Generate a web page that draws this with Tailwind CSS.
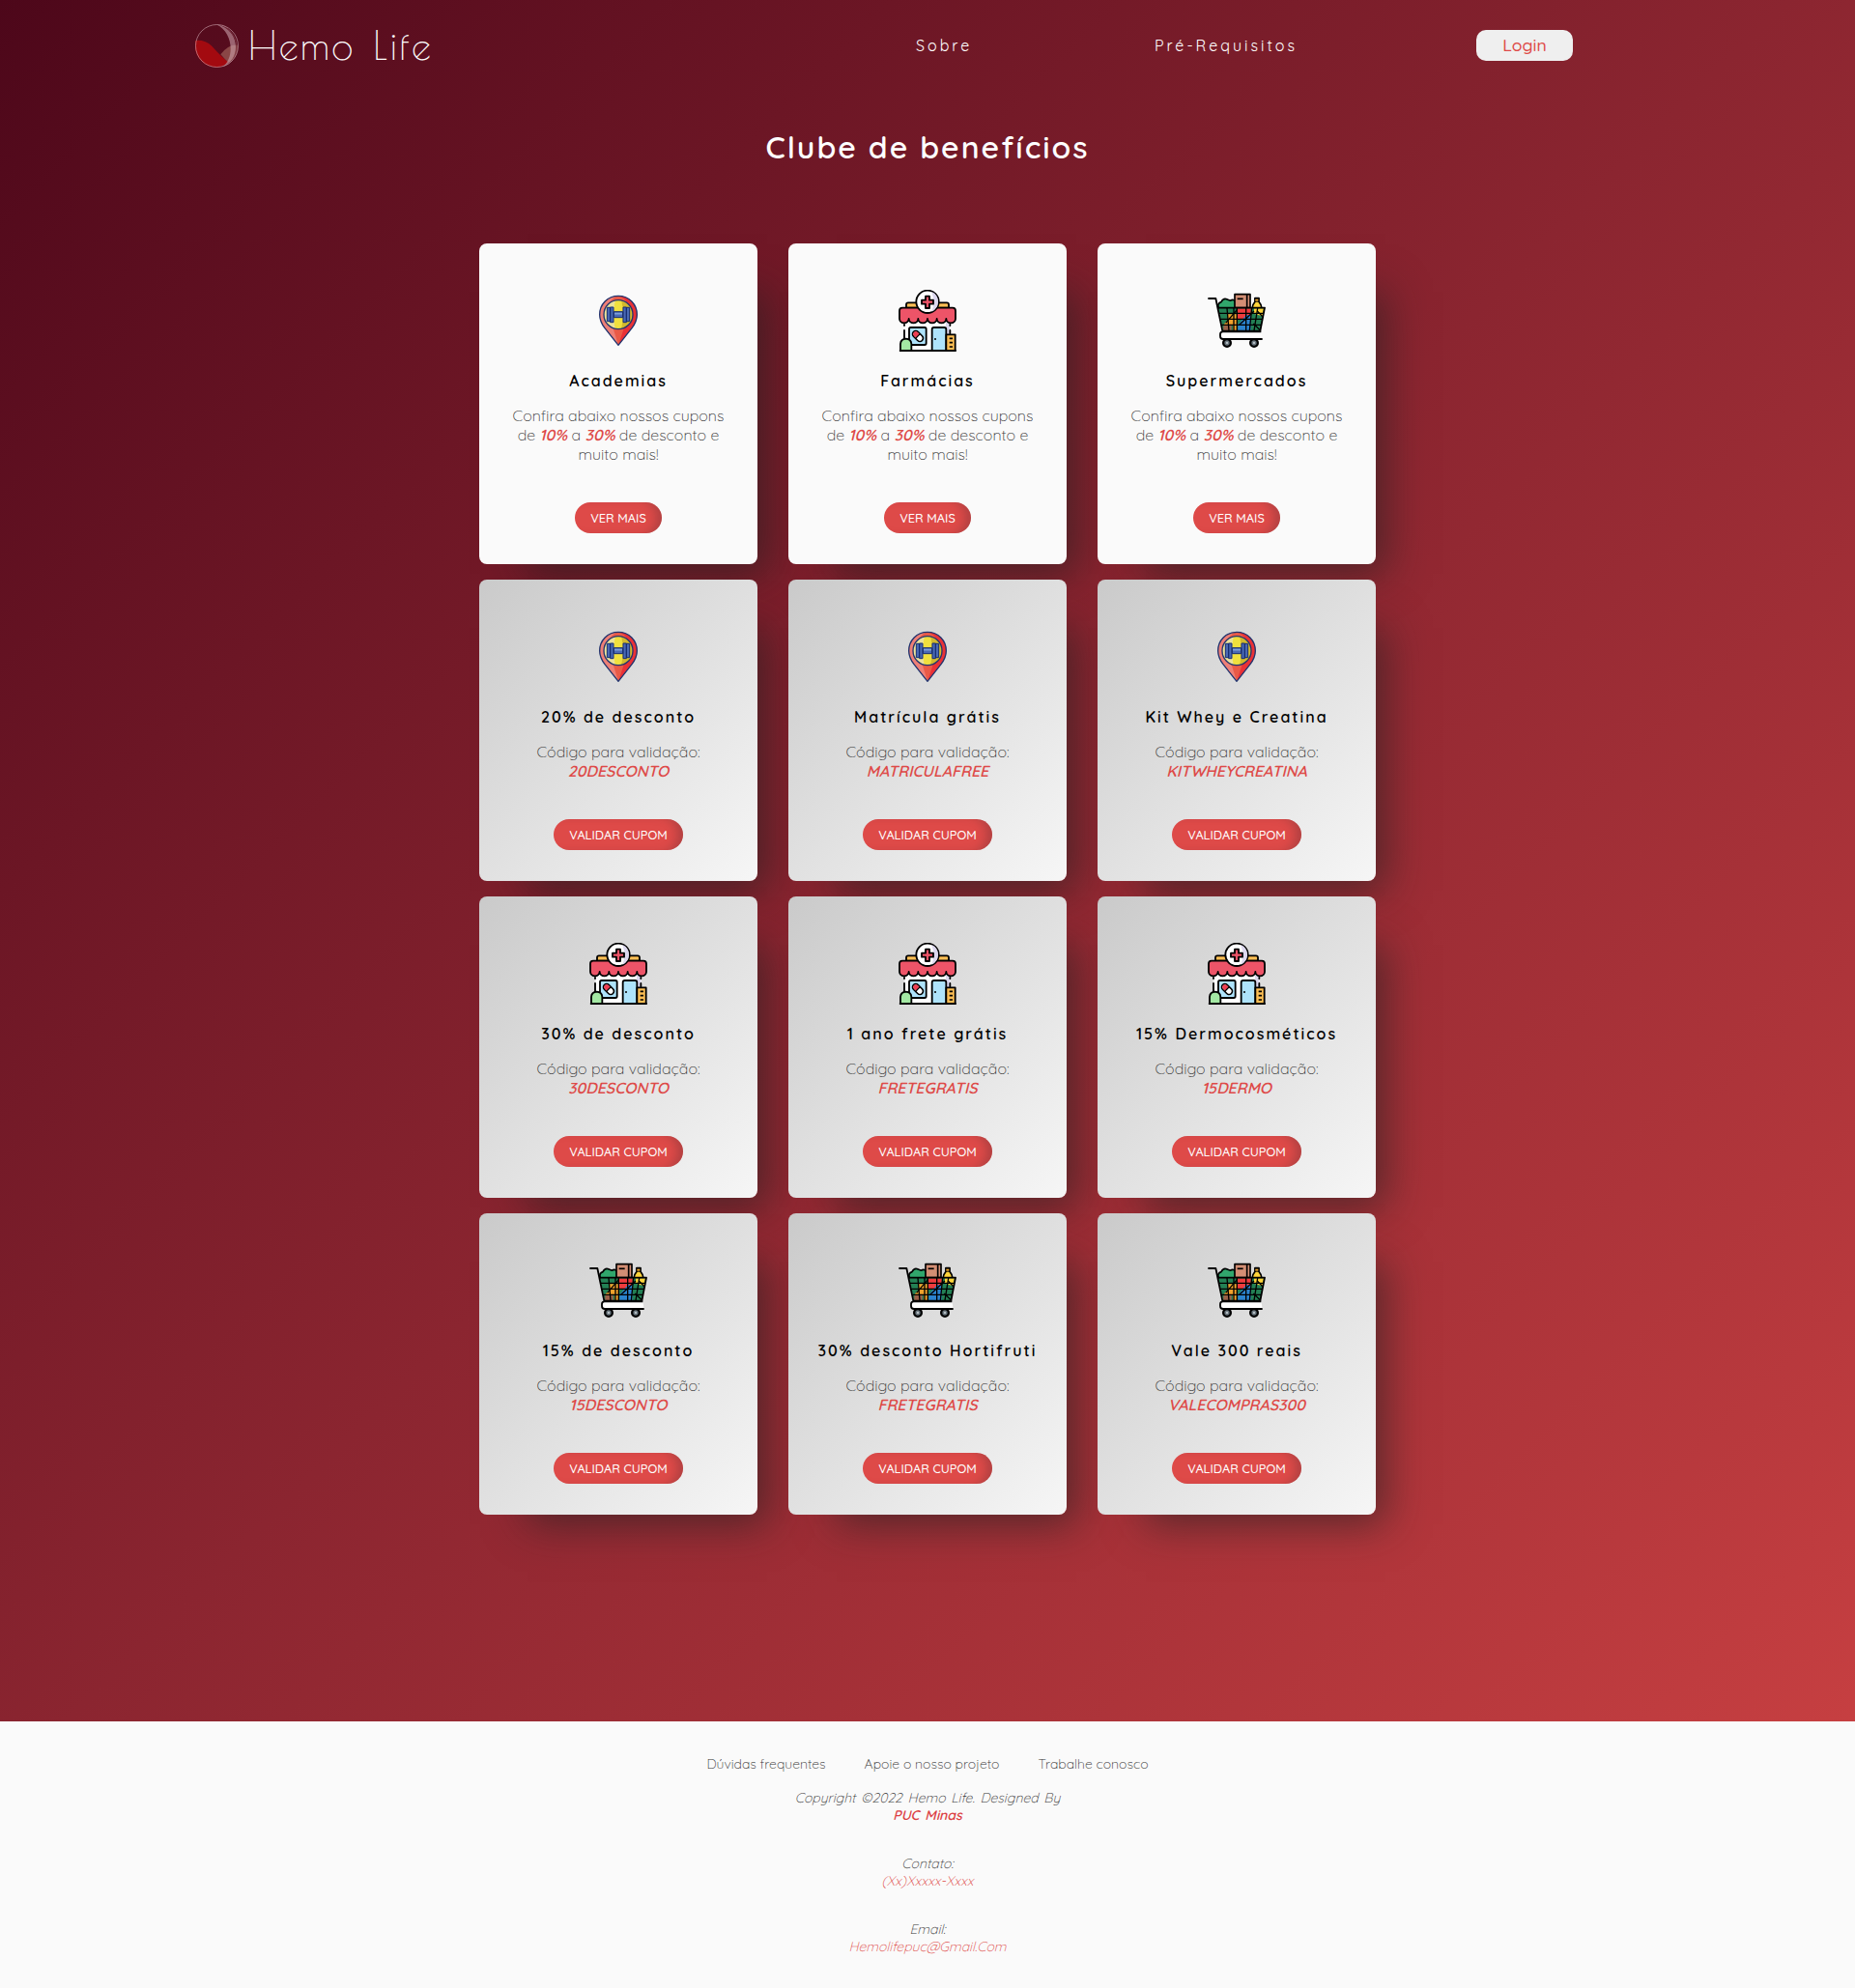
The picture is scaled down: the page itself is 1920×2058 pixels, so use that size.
<!DOCTYPE html>
<html lang="pt-BR">
<head>
<meta charset="utf-8">
<title>Hemo Life</title>
<script src="https://cdn.jsdelivr.net/npm/@tailwindcss/browser@4"></script>
</head>
<body class="font-['Quicksand','Lato',sans-serif] bg-[#fafafa]">
<svg class="hidden">
  <symbol id="gym" viewBox="54 30 192 192">
    <path d="M150 49C117 49 92 75 92 107C92 123 99 137 108 149L150 202L192 149C201 137 208 123 208 107C208 75 183 49 150 49Z" fill="#ea5a47"/>
    <path d="M150 49C117 49 92 75 92 107C92 123 99 137 108 149L150 202L134 150C100 110 118 55 150 49Z" fill="#ee7f76"/>
    <path d="M150 49C183 49 208 75 208 107C208 123 201 137 192 149L150 202L168 148C200 110 186 60 150 49Z" fill="#ea3136"/>
    <circle cx="150" cy="107" r="45" fill="#f0e03e"/>
    <path d="M141 63A45 45 0 0 0 141 151C134 130 134 84 141 63Z" fill="#ebe29a"/>
    <path d="M159 63A45 45 0 0 1 159 151C166 130 166 84 159 63Z" fill="#d2b92e"/>
    <circle cx="150" cy="107" r="45" fill="none" stroke="#20346f" stroke-width="4"/>
    <path d="M150 49C117 49 92 75 92 107C92 123 99 137 108 149L150 202L192 149C201 137 208 123 208 107C208 75 183 49 150 49Z" fill="none" stroke="#20346f" stroke-width="4" stroke-linejoin="round"/>
    <g fill="#4a69b4" stroke="#172d70" stroke-width="3"><path d="M136 98h28v18h-28zM115 85h10v43h-10zM125 84h10v47h-10zM165 84h10v47h-10zM175 85h10v43h-10z"/></g>
    <path d="M138 104h24" stroke="#7ea0d8" stroke-width="5"/>
  </symbol>
  <symbol id="pharmacy" viewBox="24 30 192 192">
    <path d="M50 128H190V218H50Z" fill="#fff"/><path d="M177 130h13v40h-13z" fill="#ddd8ef"/>
    <g stroke="#000" stroke-width="5.5" stroke-linejoin="round" stroke-linecap="round">
      <path d="M54 86V76Q54 70 60 70H180Q186 70 186 76V86Z" fill="#fdbf55"/>
      <path d="M48 138V141M48 156V182M190 138V141M190 156V166" fill="none"/>
      <path d="M42 86H198Q207 86 207 95V120A14.5 13 0 0 1 178 120A14.5 13 0 0 1 149 120A14.5 13 0 0 1 120 120A14.5 13 0 0 1 91 120A14.5 13 0 0 1 62 120A14.5 13 0 0 1 33 120V95Q33 86 42 86Z" fill="#ed5468"/>
      <circle cx="120" cy="67" r="35" fill="#fff"/>
    </g>
    <path d="M133 36A34 34 0 0 1 133 98Q145 70 133 36Z" fill="#ddd8ef"/>
    <path d="M114 50h12v12h12v12h-12v13h-12V74h-12V62h12Z" fill="#ed5468" stroke="#000" stroke-width="5.5" stroke-linejoin="round"/>
    <g stroke="#000" stroke-width="5.5" stroke-linejoin="round">
      <rect x="63" y="147" width="53" height="54" rx="5" fill="#aee3fb"/>
      <path d="M134 219V153Q134 147 140 147H172Q178 147 178 153V219Z" fill="#aee3fb"/>
      <path d="M178 169H206V219H178Z" fill="#fdbf55"/>
      <path d="M36 219V198Q37 183 53 182Q69 183 70 198V219Z" fill="#a4e9a4"/>
      <path d="M35 219H207" stroke-linecap="round"/>
    </g>
    <path d="M188 181h10M188 194h10M188 207h10" stroke="#000" stroke-width="5"/>
    <circle cx="144" cy="183" r="3"/>
    <g transform="rotate(45 90 174)"><rect x="71" y="164" width="38" height="20" rx="10" fill="#fff" stroke="#000" stroke-width="5"/><path d="M90 166H81A8 8 0 0 0 81 182H90Z" fill="#ed3f52"/><path d="M90 164v20" stroke="#000" stroke-width="4"/></g>
  </symbol>
  <symbol id="cart" viewBox="24 30 192 192">
    <g stroke="#000" stroke-width="5" stroke-linejoin="round">
      <path d="M64 86Q59 72 72 68Q79 54 91 60Q99 64 101 63Q111 57 116 68V88H64Z" fill="#31a66c"/>
      <path d="M114 44H162V86H114Z" fill="#d38e74"/>
      <path d="M152 44V86" fill="none"/>
      <path d="M177 56H189V67Q196 74 198 88H168Q170 74 177 67Z" fill="#ffd43a"/>
    </g>
    <path d="M175 54h15v14h-15z" fill="#000"/><path d="M178 59h9v6h-9z" fill="#e8a42b"/>
    <path d="M122 58H140" stroke="#000" stroke-width="5"/>
    <path d="M63 86H207L193 158H78Z" fill="#238054"/>
    <path d="M122 88H164V120H122Z" fill="#ee3b3d"/><path d="M174 88H204L200 112L174 104Z" fill="#ffd43a"/>
    <path d="M92 106H122V140H78L92 124Z" fill="#efa12c"/><path d="M108 124H122V157H108Z" fill="#efa12c"/>
    <path d="M124 138L150 108H164V157H124Z" fill="#2b83cf"/><path d="M79 140H104V157H79Z" fill="#9c6048"/>
    <path d="M65 103H204M69 121H201M74 139H197M90 87L96 157M111 87V157M121 87V157M149 87V157M167 87L160 157M185 87L174 157" stroke="#000" stroke-width="4" fill="none"/>
    <path d="M86 133L122 91M128 139L174 96M172 135L194 157M184 96L203 116" stroke="#000" stroke-width="4"/>
    <path d="M31 57H55L76 158H193L207 86H62" fill="none" stroke="#000" stroke-width="5.5" stroke-linejoin="round"/>
    <path d="M196 160H77Q69 160 69 168V174Q69 183 78 183H200" fill="#fff" stroke="#000" stroke-width="5.5"/>
    <g fill="#68747c" stroke="#000" stroke-width="7"><circle cx="90" cy="195" r="11.5"/><circle cx="174" cy="195" r="11.5"/></g>
    <g fill="#b8c0c5"><circle cx="90" cy="195" r="3.5"/><circle cx="174" cy="195" r="3.5"/></g>
  </symbol>
</svg>

<div class="h-[1782px] bg-linear-[135deg,#4d071a,#8b2530_50%,#c63f41] flex flex-col items-center">
  <header class="w-full h-24 flex items-start text-white">
    <div class="ml-[202px] w-[746px] flex">
      <svg class="mt-[25px] size-[45px]" viewBox="0 0 135 135">
        <path d="M1 51Q30 48 52 68Q84 105 104 117Q90 133 67 134A67 67 0 0 1 1 51Z" fill="#a30a10"/>
        <path d="M79 94Q104 61 133 65Q134 103 104 119Q91 109 79 94Z" fill="#8a4646"/>
        <path d="M66 1C140 15 145 110 84 133C124 106 118 25 66 1Z" fill="#c9a0aa" fill-opacity=".6"/>
        <path d="M84 3C144 35 141 110 91 130" stroke="#7c3442" stroke-width="3" fill="none"/>
        <circle cx="67.500" cy="67.500" r="66" fill="none" stroke="#c9a0aa" stroke-opacity=".75" stroke-width="2.500"/>
      </svg>
      <div class="ml-[10px] mt-[22px] text-[40px] leading-[50px] font-['Poiret_One','Quicksand',sans-serif] tracking-[2.2px] [word-spacing:8px] whitespace-nowrap">Hemo Life</div>
    </div>
    <a class="mt-[37px] w-[247px] leading-5 font-normal tracking-[3px]">Sobre</a>
    <a class="mt-[37px] w-[333px] leading-5 font-normal tracking-[3px]">Pré-Requisitos</a>
    <button class="mt-[31px] w-[100px] h-8 pb-0.5 rounded-[10px] bg-[#efefef] text-[#de4a48] font-medium text-[17.6px] leading-5">Login</button>
  </header>
  <h1 class="mt-9 h-10 text-[32px] leading-10 font-semibold text-white tracking-[2px]">Clube de benefícios</h1>
  <main id="cards" class="mt-20 grid grid-cols-3 gap-x-8 gap-y-4"></main>
</div>

<footer class="h-[276px] bg-[#fafafa] flex flex-col items-center text-[#333] font-light text-sm leading-[18px]">
  <nav class="mt-[35px] flex gap-10">
    <a>Dúvidas frequentes</a><a>Apoie o nosso projeto</a><a>Trabalhe conosco</a>
  </nav>
  <div class="mt-[17px] italic text-center [word-spacing:2px]">
    <p>Copyright ©2022 Hemo Life. Designed By</p>
    <p class="font-semibold text-[#dc4043]">PUC Minas</p>
    <p class="mt-8">Contato:</p>
    <p class="text-[#de4a48]">(Xx)Xxxxx-Xxxx</p>
    <p class="mt-8">Email:</p>
    <p class="text-[#de4a48]">Hemolifepuc@Gmail.Com</p>
  </div>
</footer>

<script>
const cards = [
  ['gym', 'Academias'],
  ['pharmacy', 'Farmácias'],
  ['cart', 'Supermercados'],
  ['gym', '20% de desconto', '20DESCONTO'],
  ['gym', 'Matrícula grátis', 'MATRICULAFREE'],
  ['gym', 'Kit Whey e Creatina', 'KITWHEYCREATINA'],
  ['pharmacy', '30% de desconto', '30DESCONTO'],
  ['pharmacy', '1 ano frete grátis', 'FRETEGRATIS'],
  ['pharmacy', '15% Dermocosméticos', '15DERMO'],
  ['cart', '15% de desconto', '15DESCONTO'],
  ['cart', '30% desconto Hortifruti', 'FRETEGRATIS'],
  ['cart', 'Vale 300 reais', 'VALECOMPRAS300'],
];
const intro = `Confira abaixo nossos cupons<br>de <b class="font-semibold italic text-[#de4a48]">10%</b> a <b class="font-semibold italic text-[#de4a48]">30%</b> de desconto e<br>muito mais!`;
document.getElementById('cards').innerHTML = cards.map(([icon, title, code]) => `
  <article class="w-72 rounded-lg pt-12 pb-8 flex flex-col items-center text-center leading-5 shadow-[30px_30px_40px_-20px_rgba(34,34,34,0.6)] ${code ? 'bg-linear-[135deg,#cacaca,#f6f6f6]' : 'bg-[#fafafa]'}">
    <svg class="size-16"><use href="#${icon}"/></svg>
    <h2 class="mt-5 font-semibold text-black tracking-[2px] whitespace-nowrap">${title}</h2>
    <p class="mt-4 font-light text-[#333]">${code ? `Código para validação:<br><span class="font-semibold italic text-[#de4a48]">${code}</span>` : intro}</p>
    <button class="mt-10 h-8 rounded-full bg-[#de4a48] text-white text-[12.8px] font-medium shadow-[inset_-10px_0_10px_-4px_rgba(100,50,55,0.35)] ${code ? 'w-[134px]' : 'w-[90px]'}">${code ? 'VALIDAR CUPOM' : 'VER MAIS'}</button>
  </article>`).join('');
</script>
</body>
</html>
